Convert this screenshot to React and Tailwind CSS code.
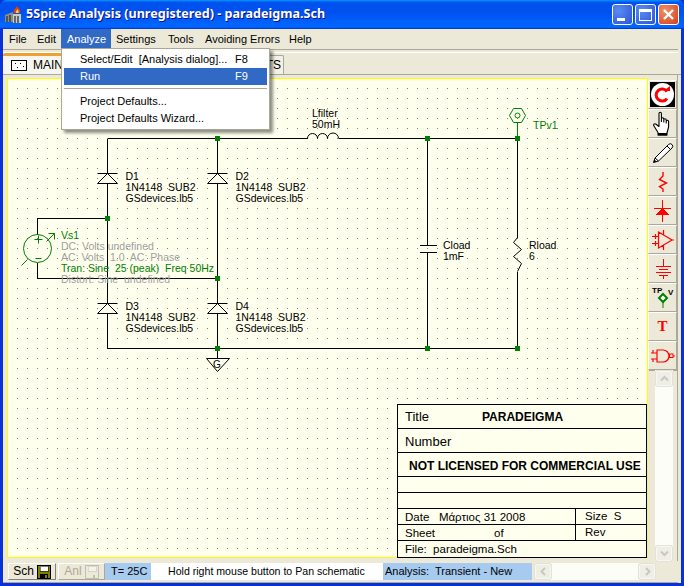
const BG = "#ffffee";
const GREEN = "#008000";
const RED = "#ff0000";

const menuItems = [
  { label: "File", cls: "w-[28px] pl-[6px]" },
  { label: "Edit", cls: "w-[30px] pl-[6px]" },
  { label: "Analyze", cls: "w-[50px] pl-[6px] bg-[#316ac5] text-white" },
  { label: "Settings", cls: "w-[52px] pl-[5px]" },
  { label: "Tools", cls: "w-[37px] pl-[5px]" },
  { label: "Avoiding Errors", cls: "w-[84px] pl-[5px]" },
  { label: "Help", cls: "w-[40px] pl-[5px]" },
];

const junctions = [
  [217, 139], [427, 139], [517, 139], [107, 219], [217, 279], [217, 349], [427, 349], [517, 349],
];

const diodes = [
  { x: 107, y: 174, name: "D1" },
  { x: 217, y: 174, name: "D2" },
  { x: 107, y: 304, name: "D3" },
  { x: 217, y: 304, name: "D4" },
];

function Diode({ x, y, name }) {
  const tx = x + 18;
  return (
    <g>
      <line x1={x - 10} y1={y} x2={x + 10} y2={y} stroke="#000" />
      <polygon points={`${x},${y} ${x - 10},${y + 10} ${x + 10},${y + 10}`} fill={BG} stroke="#000" />
      <text x={tx} y={y + 6} stroke="none" fill="#000" className="text-[10.5px]">{name}</text>
      <text x={tx} y={y + 17} stroke="none" fill="#000" xmlSpace="preserve" className="text-[10.5px]">1N4148  SUB2</text>
      <text x={tx} y={y + 28} stroke="none" fill="#000" className="text-[10.5px]">GSdevices.lb5</text>
    </g>
  );
}

function Schematic() {
  return (
    <svg viewBox="8 80 639 478" className="block w-[639px] h-[478px] font-['Liberation_Sans',sans-serif]">
      <defs>
        <pattern id="dots" x="7" y="9" width="10" height="10" patternUnits="userSpaceOnUse">
          <rect width="1" height="1" fill="#808070" shapeRendering="crispEdges" />
        </pattern>
      </defs>
      <rect x="17" y="89" width="630" height="469" fill="url(#dots)" />
      <g transform="translate(0.5 0.5)" fill="none" stroke="#000" shapeRendering="crispEdges">
        <path d="M107 139H307M338 139H517V238M517 272V349H107V139M217 139V349M217 349V359M37 235V219H107M37 263V279H217M427 139V246M427 253V349" />
        <path d="M419 246H436M419 253H436" />
      </g>
      <g transform="translate(0.5 0.5)" fill="none" stroke="#000">
        <path d="M307 139a5 5 0 0 1 10 0a5 5 0 0 1 10 0a5 5 0 0 1 11 0" />
        <path d="M517 238L513 243L521 250L513 257L521 264L517 272" />
        {diodes.map((d) => <Diode key={d.name} {...d} />)}
        <polygon points="206,359 229,359 217,372" fill={BG} />
      </g>
      <text x="217" y="369" textAnchor="middle" fill="#000" className="text-[10px]">G</text>
      {junctions.map(([x, y]) => (
        <rect key={`${x}-${y}`} x={x - 2} y={y - 2} width="5" height="5" fill={GREEN} />
      ))}
      <g transform="translate(0.5 0.5)" fill="none" stroke={GREEN}>
        <circle cx="37" cy="249" r="14" />
        <path d="M34 240H42M38 236V244M35 259H41" />
        <path d="M46 242L54 234M48 234H54V240M21 266L27 260" />
        <path d="M509 116L513 109H521L525 116L521 123H513ZM517 123V137" />
        <circle cx="517" cy="116" r="2.5" />
      </g>
      <g className="text-[10.5px]">
        <text x="61" y="240" fill={GREEN}>Vs1</text>
        <text x="61" y="251" fill="#a0a0a0">DC: Volts undefined</text>
        <text x="61" y="262" fill="#a0a0a0" xmlSpace="preserve">AC: Volts  1.0  AC: Phase</text>
        <text x="61" y="273" fill={GREEN} xmlSpace="preserve">Tran: Sine  25 (peak)  Freq 50Hz</text>
        <text x="61" y="284" fill="#a0a0a0" xmlSpace="preserve">Distort: Sine  undefined</text>
        <text x="312" y="118" fill="#000">Lfilter</text>
        <text x="312" y="129" fill="#000">50mH</text>
        <text x="533" y="130" fill={GREEN}>TPv1</text>
        <text x="443" y="250" fill="#000">Cload</text>
        <text x="443" y="261" fill="#000">1mF</text>
        <text x="529" y="250" fill="#000">Rload</text>
        <text x="529" y="261" fill="#000">6</text>
      </g>
    </svg>
  );
}

function TitleBlock() {
  return (
    <div className="absolute right-0 -bottom-[1px] w-[250px] h-[154px] bg-[#ffffee] border border-black flex flex-col text-black text-[12px]">
      <div className="h-[24px] shrink-0 border-b border-black flex items-center pl-[7px] pt-[1px] text-[13px]">
        <span className="w-[77px]">Title</span>
        <span className="font-bold text-[12px]">PARADEIGMA</span>
      </div>
      <div className="h-[24px] shrink-0 border-b border-black flex items-center pl-[7px] pt-[3px] text-[13px]">Number</div>
      <div className="h-[24px] shrink-0 border-b border-black flex items-center pl-[11px] pt-[3px] font-bold text-[12px] whitespace-nowrap">NOT LICENSED FOR COMMERCIAL USE</div>
      <div className="h-[16px] shrink-0 border-b border-black" />
      <div className="h-[16px] shrink-0 border-b border-black" />
      <div className="h-[16px] shrink-0 border-b border-black flex items-center text-[11.5px]">
        <span className="w-[178px] h-full border-r border-black pl-[7px] whitespace-pre leading-[16px]">Date   Μάρτιος 31 2008</span>
        <span className="pl-[9px] whitespace-pre">Size  S</span>
      </div>
      <div className="h-[16px] shrink-0 border-b border-black flex items-center text-[11.5px]">
        <span className="w-[178px] h-full border-r border-black pl-[7px] flex leading-[16px]">
          <span className="w-[89px]">Sheet</span>
          <span>of</span>
        </span>
        <span className="pl-[9px]">Rev</span>
      </div>
      <div className="flex-1 flex items-center pl-[7px] text-[11.5px] whitespace-pre">File:  paradeigma.Sch</div>
    </div>
  );
}

function ToolIcon({ children }) {
  return (
    <div className="w-[29px] h-[29px] shrink-0 flex items-center justify-center bg-[#ece9d8] border border-t-white border-l-white border-r-[#aca899] border-b-[#aca899] shadow-[1px_1px_0_#aca899]">
      {children}
    </div>
  );
}

function Toolbar() {
  return (
    <div className="flex flex-col">
      <ToolIcon>
        <svg width="25" height="25" viewBox="0 0 25 25">
          <rect width="25" height="25" fill="#000" />
          <circle cx="12.5" cy="12.5" r="11.5" fill="#fff" />
          <path d="M17 9.5A6 6 0 1 0 17 16.5" fill="none" stroke={RED} strokeWidth="3" />
          <path d="M13.5 9H20V4Z" fill={RED} />
        </svg>
      </ToolIcon>
      <ToolIcon>
        <svg width="19" height="25" viewBox="0 0 19 25">
          <path d="M6 2.5a1.2 1.2 0 0 1 2.4 0V10.5V8a1.2 1.2 0 0 1 2.4 0V11V9a1.2 1.2 0 0 1 2.4 0V12V10.5a1.2 1.2 0 0 1 2.4 0V16L14 22V24H5V21.5L1 15C0 13.5 1.5 12 3 13.2L6 15.5Z" fill="#fff" stroke="#000" strokeWidth="1.1" strokeLinejoin="round" />
          <rect x="5" y="22" width="9" height="2.5" fill="#000" />
        </svg>
      </ToolIcon>
      <ToolIcon>
        <svg width="22" height="22" viewBox="0 0 22 22">
          <path d="M1.5 20.5L3 16L16.5 2.5A2 2 0 0 1 20 6L6.5 19Z" fill="#fff" stroke="#000" strokeLinejoin="round" />
          <path d="M3 16L6.5 19M15 4L18.5 7.5" fill="none" stroke="#000" />
          <path d="M1.5 20.5L4.5 19.5L2.5 17.5Z" fill="#000" />
        </svg>
      </ToolIcon>
      <ToolIcon>
        <svg width="12" height="22" viewBox="0 0 12 22">
          <path d="M6 1V5L2.5 8.5L9.5 12L2.5 15.5L6 18V21" fill="none" stroke={RED} strokeWidth="1.4" />
        </svg>
      </ToolIcon>
      <ToolIcon>
        <svg width="17" height="22" viewBox="0 0 17 22" shapeRendering="crispEdges">
          <path d="M8.5 0V22M0 8.5H17" stroke={RED} />
          <path d="M8.5 8L1 15H16Z" fill={RED} />
        </svg>
      </ToolIcon>
      <ToolIcon>
        <svg width="22" height="22" viewBox="0 0 22 22">
          <path d="M6.5 3L20 11L6.5 19ZM0 7.5H6.5M0 14.5H6.5M11.5 1V5.5M11.5 16.5V21M20 11H22M3.5 5V10M3.5 12V17" fill="none" stroke={RED} strokeWidth="1.2" />
        </svg>
      </ToolIcon>
      <ToolIcon>
        <svg width="16" height="22" viewBox="0 0 16 22" shapeRendering="crispEdges">
          <path d="M8.5 1V8M1 8.5H16M4 11.5H13M1 14.5H16M4 17.5H13M8.5 18V21" fill="none" stroke={RED} />
        </svg>
      </ToolIcon>
      <ToolIcon>
        <svg width="24" height="25" viewBox="0 0 24 25">
          <text x="1" y="8" fill="#000" className="font-bold text-[8px]">TP</text>
          <text x="17" y="10" fill="#000" className="font-bold text-[8px]">V</text>
          <path d="M12 9L16 13L12 17L8 13Z" fill="#fff" stroke={GREEN} strokeWidth="2" />
          <path d="M12 17V23" stroke={GREEN} />
        </svg>
      </ToolIcon>
      <ToolIcon>
        <span className="text-[#ff0000] text-[15px] leading-none font-semibold font-['Liberation_Serif',serif]">T</span>
      </ToolIcon>
      <ToolIcon>
        <svg width="24" height="16" viewBox="0 0 24 16">
          <path d="M6 2H12A6 6 0 0 1 12 14H6ZM0 5H6M0 11H6M2 2V5M2 11V14" fill="none" stroke={RED} strokeWidth="1.2" />
          <rect x="18.5" y="6" width="3.5" height="3.5" fill="none" stroke={RED} />
          <path d="M22 8H24" stroke={RED} />
        </svg>
      </ToolIcon>
    </div>
  );
}

function ScrollBtn({ children }) {
  return (
    <div className="w-[16px] h-[15px] shrink-0 flex items-center justify-center rounded-[2px] bg-[#eeeee6] border border-[#f8f8f2] shadow-[0_0_0_1px_#e4e2d6]">
      {children}
    </div>
  );
}

const Chevron = ({ d }) => (
  <svg width="9" height="9" viewBox="0 0 9 9">
    <path d={d} fill="none" stroke="#c8c8bc" strokeWidth="2" />
  </svg>
);

function Floppy({ dim }) {
  const line = dim ? "#c0bfb4" : "#000";
  const fill = dim ? "#ece9d8" : "#808000";
  return (
    <svg width="14" height="14" viewBox="0 0 14 14" shapeRendering="crispEdges">
      <rect x="0.5" y="0.5" width="13" height="13" fill={fill} stroke={line} />
      <rect x="3" y="1" width="8" height="5" fill={dim ? "#f4f3ea" : "#fff"} stroke={line} strokeWidth="0.5" />
      <rect x="3" y="9" width="8" height="4" fill={dim ? "#ece9d8" : "#000"} />
      <rect x="8" y="10" width="2" height="3" fill={dim ? "#c0bfb4" : "#808000"} />
    </svg>
  );
}

export default function App() {
  return (
    <div className="relative w-[684px] h-[586px] overflow-hidden bg-[#0831d9] flex flex-col text-black text-[11px] font-['Liberation_Sans',sans-serif]">
      {/* title bar */}
      <div className="h-[29px] shrink-0 flex items-center pl-[5px] pr-[5px] rounded-t-[6px] bg-[linear-gradient(180deg,#0997ff,#0053ee_8%,#0050ee_40%,#0066ff_88%,#0066ff_93%,#005bff_95%,#003dd7_96%,#003dd7)]">
        <svg width="18" height="18" viewBox="0 0 18 18" className="shrink-0">
          <path d="M0 9L8 6V16H0Z" fill="#8a8f8a" />
          <path d="M8 8H16V17H8Z" fill="#c8ccc8" />
          <path d="M2 10V16M5 9V16M10 10V17M13 10V17" stroke="#333" strokeWidth="1.3" />
          <path d="M9 7C8 3 11 3 12 0C14 3 16 4 15 7Z" fill="#e8400c" />
          <path d="M11 7C10.5 5 12 4.5 12.5 3C13.5 5 14 5.5 13.5 7Z" fill="#ffd23c" />
        </svg>
        <span className="ml-[3px] text-white font-bold text-[12.6px] whitespace-nowrap font-['Noto_Sans',sans-serif] [text-shadow:1px_1px_#0f1089]">
          5Spice Analysis (unregistered) - paradeigma.Sch
        </span>
        <div className="ml-auto flex gap-[2px]">
          <div className="w-[21px] h-[21px] rounded-[3px] border border-white bg-[radial-gradient(circle_at_30%_30%,#5a8bf0,#2a55d8)] flex items-end pl-[4px] pb-[3px]">
            <div className="w-[8px] h-[3px] bg-white" />
          </div>
          <div className="w-[21px] h-[21px] rounded-[3px] border border-white bg-[radial-gradient(circle_at_30%_30%,#5a8bf0,#2a55d8)] flex items-center justify-center">
            <div className="w-[13px] h-[12px] border border-white border-t-[3px]" />
          </div>
          <div className="w-[21px] h-[21px] rounded-[3px] border border-white bg-[radial-gradient(circle_at_30%_30%,#f0906a,#d2401a)] flex items-center justify-center">
            <svg width="13" height="13" viewBox="0 0 13 13">
              <path d="M2 2L11 11M11 2L2 11" stroke="#fff" strokeWidth="2.4" />
            </svg>
          </div>
        </div>
      </div>

      <div className="flex-1 mx-[3px] mb-[3px] bg-[#ece9d8] flex flex-col min-h-0">
        {/* menu */}
        <div className="h-[20px] shrink-0 flex items-center text-[11px]">
          {menuItems.map((m) => (
            <div key={m.label} className={`h-full flex items-center whitespace-nowrap ${m.cls}`}>{m.label}</div>
          ))}
        </div>
        <div className="h-[4px] shrink-0 border-t border-b border-t-[#aca899] border-b-white mr-[3px]" />

        {/* tabs */}
        <div className="h-[22px] shrink-0 flex items-end border-b border-[#aca899] text-[12px]">
          <div className="w-[68px] h-[21px] shrink-0 bg-[#f6f5ef] border-t-[3px] border-t-[#f0a030] rounded-t-[2px] flex items-center pl-[8px] gap-[6px]">
            <svg width="16" height="11" viewBox="0 0 16 11" className="shrink-0" shapeRendering="crispEdges">
              <rect x="0.5" y="0.5" width="15" height="10" fill="#fff" stroke="#000" />
              <path d="M4 3h1v1H4zM9 3h1v1H9zM12 6h1v1h-1zM6 7h1v1H6z" fill="#000" />
            </svg>
            <span>MAIN</span>
          </div>
          <div className="w-[213px] h-[19px] bg-[#f3f1e6] border border-b-0 border-[#aca899] rounded-t-[2px] flex items-center justify-end pr-[2px]">
            <span>TS</span>
          </div>
        </div>

        {/* canvas and toolbar */}
        <div className="flex-1 flex min-h-0 pl-[4px] pt-[3px] mr-[3px] border-r border-[#aca899]">
          <div className="relative w-[641px] h-[480px] box-border border border-[#ffff00] bg-[#ffffee] shrink-0">
            <Schematic />
            <TitleBlock />
          </div>
          <div className="flex flex-col pt-[2px]">
            <Toolbar />
            <div className="flex-1 ml-[7px] w-[18px] bg-[#fdfdf8] flex flex-col items-center justify-between pt-[1px]">
              <ScrollBtn><Chevron d="M1 6.5L4.5 3L8 6.5" /></ScrollBtn>
              <ScrollBtn><Chevron d="M1 2.5L4.5 6L8 2.5" /></ScrollBtn>
            </div>
          </div>
        </div>

        {/* status bar */}
        <div className="h-[22px] shrink-0 flex items-start pl-[5px] pt-[2px] border-b border-[#aca899] mr-[3px] text-[11px] leading-[17px]">
          <div className="w-[48px] h-[17px] flex items-center justify-center gap-[3px] border border-t-white border-l-white border-r-[#808080] border-b-[#808080] text-[12px]">
            <span>Sch</span>
            <Floppy />
          </div>
          <div className="w-[47px] h-[17px] ml-[2px] flex items-center justify-center gap-[3px] border border-t-white border-l-white border-r-[#aca899] border-b-[#aca899] text-[#aca899] text-[12px]">
            <span>Anl</span>
            <Floppy dim />
          </div>
          <div className="w-[46px] h-[17px] bg-[#a6caf0] pl-[6px]">T= 25C</div>
          <div className="w-[232px] h-[17px] bg-white pl-[17px] text-[10.6px] whitespace-nowrap">Hold right mouse button to Pan schematic</div>
          <div className="w-[149px] h-[17px] bg-[#a6caf0] pl-[2px] whitespace-pre">Analysis:  Transient - New</div>
          <div className="w-[120px] h-[17px] ml-[3px] bg-[#fdfdf8] flex justify-between pt-[1px]">
            <ScrollBtn><Chevron d="M6 1L2.5 4.5L6 8" /></ScrollBtn>
            <ScrollBtn><Chevron d="M3 1L6.5 4.5L3 8" /></ScrollBtn>
          </div>
        </div>
      </div>

      {/* Analyze dropdown */}
      <div className="absolute left-[61px] top-[48px] w-[209px] bg-white border border-[#aca899] p-[2px] shadow-[3px_3px_3px_rgba(0,0,0,0.45)] text-[11px]">
        <div className="h-[17px] flex items-center pl-[16px] whitespace-pre">
          <span className="w-[155px]">Select/Edit  [Analysis dialog]...</span>
          <span>F8</span>
        </div>
        <div className="h-[17px] flex items-center pl-[16px] bg-[#316ac5] text-white">
          <span className="w-[155px]">Run</span>
          <span>F9</span>
        </div>
        <div className="h-[8px] flex items-center">
          <div className="w-full h-[2px] border-t border-b border-t-[#aca899] border-b-white" />
        </div>
        <div className="h-[17px] flex items-center pl-[16px]">Project Defaults...</div>
        <div className="h-[17px] flex items-center pl-[16px]">Project Defaults Wizard...</div>
      </div>
    </div>
  );
}
